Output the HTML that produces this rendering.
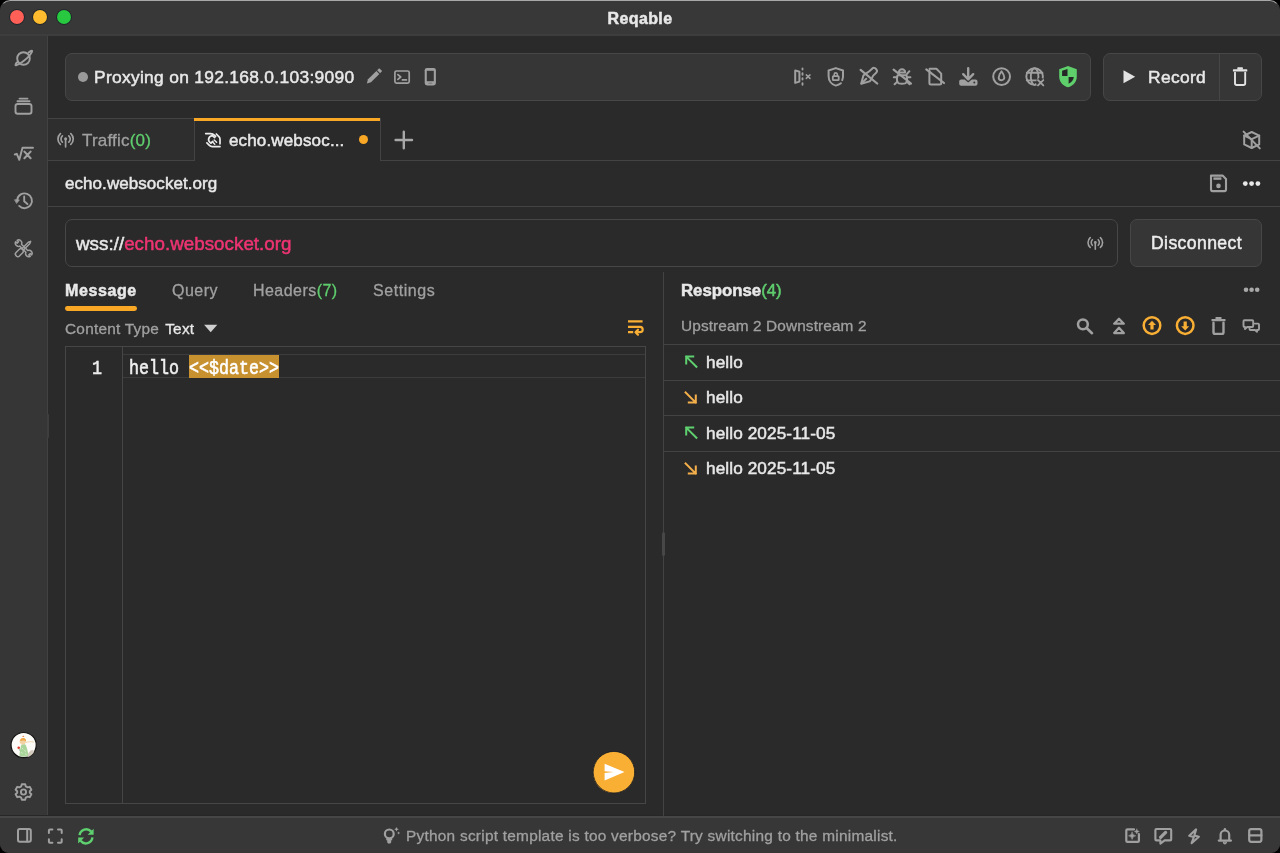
<!DOCTYPE html>
<html><head><meta charset="utf-8">
<style>
*{box-sizing:border-box;margin:0;padding:0}
html,body{width:1280px;height:853px;overflow:hidden;background:#000}
body{font-family:"Liberation Sans",sans-serif;color:#e6e6e6;position:relative}
.a{position:absolute}
.win{position:absolute;left:0;top:0;width:1280px;height:853px;background:#2a2a2a;border-radius:10px 10px 9px 9px;overflow:hidden}
.title{left:0;top:0;width:1280px;height:35px;background:#383838}
.hb{background:#424242}
.t{white-space:nowrap;line-height:1;transform:translateZ(0);-webkit-text-stroke:0.5px currentColor}
svg{position:absolute;overflow:visible}
</style></head><body>
<div class="win">
  <!-- title bar -->
  <div class="a title"></div>
  <div class="a" style="left:0;top:0;width:1280px;height:14px;border-top:1px solid #a8a8a8;border-left:1px solid rgba(168,168,168,0);border-right:1px solid rgba(168,168,168,0);border-radius:10px 10px 0 0"></div>
  <div class="a" style="left:9.6px;top:9.8px;width:14px;height:14px;border-radius:50%;background:#fe5f57;box-shadow:0 0 0 0.8px #1a2228"></div>
  <div class="a" style="left:33.3px;top:9.8px;width:14px;height:14px;border-radius:50%;background:#febc2e;box-shadow:0 0 0 0.8px #1a2228"></div>
  <div class="a" style="left:57.1px;top:9.8px;width:14px;height:14px;border-radius:50%;background:#28c840;box-shadow:0 0 0 0.8px #1a2228"></div>
  <div class="a t" style="left:0;width:1280px;top:10.6px;text-align:center;font-weight:bold;font-size:16px;letter-spacing:0.4px;color:#e8e8e8">Reqable</div>
  <div class="a" style="left:0;top:34px;width:1280px;height:2px;background:#3d3d3d"></div>

  <!-- sidebar -->
  <div class="a" style="left:0;top:36px;width:47px;height:780px;background:#363636"></div>
  <div class="a hb" style="left:47px;top:36px;width:1px;height:780px"></div>


  <svg width="1280" height="853" viewBox="0 0 1280 853" style="left:0;top:0" fill="none" stroke-linecap="round" stroke-linejoin="round">
    <!-- sidebar icons -->
    <g stroke="#a0a0a0" stroke-width="1.9">
      <!-- planet -->
      <circle cx="23.5" cy="58.5" r="6.3"/>
      <path d="M28.6 52.5 C31.5 50 32.8 50.2 31.8 52.2 C30.5 54.8 26 59.5 21.5 62.5 C17 65.5 15 66 15.5 64.5 C15.8 63.5 16.8 62.5 18 61.5"/>
      <!-- stack -->
      <rect x="15.5" y="104" width="16" height="9.8" rx="2.3"/>
      <path d="M17.5 101.2 H29.5 M19.5 98.6 H27.5"/>
      <!-- sqrt x -->
      <path d="M14.8 154.5 L16.8 153.8 L19.3 159.8 L22.5 147.8 H33"/>
      <path d="M24.4 151.6 L30.6 158.2 M30.6 151.6 L24.4 158.2" stroke-width="2.1"/>
      <!-- history -->
      <path d="M17.2 199.8 A7.4 7.4 0 1 1 19.2 205.9"/>
      <path d="M14.9 199.8 L19.3 199.9 L16.8 203.1 Z" fill="#a0a0a0" stroke-width="0.8"/>
      <path d="M24.2 196.4 V201.2 L27.4 204"/>
      <!-- tools -->
      <g transform="translate(23.7 248.3) rotate(-45)" stroke-width="1.5">
        <path d="M-1.3 -4.4 A3.1 3.1 0 0 1 -1 -10.3 V-8.3 H1 V-10.3 A3.1 3.1 0 0 1 1.3 -4.4 V4.4 A3.1 3.1 0 0 1 1 10.3 V8.3 H-1 V10.3 A3.1 3.1 0 0 1 -1.3 4.4 Z"/>
      </g>
      <g transform="translate(23.7 248.3) rotate(45)" stroke-width="1.5">
        <rect x="-2.4" y="1.6" width="4.8" height="9" rx="2.2"/>
        <path d="M-1 1.6 V-7.5 L0 -9.8 L1 -7.5 V1.6"/>
      </g>
      <!-- gear -->
      <circle cx="23.5" cy="792" r="2.6"/>
      <path d="M21.8 784.3 H25.2 L25.8 786.4 L27.6 787.4 L29.7 786.8 L31.4 789.7 L29.8 791.2 V792.8 L31.4 794.3 L29.7 797.2 L27.6 796.6 L25.8 797.6 L25.2 799.7 H21.8 L21.2 797.6 L19.4 796.6 L17.3 797.2 L15.6 794.3 L17.2 792.8 V791.2 L15.6 789.7 L17.3 786.8 L19.4 787.4 L21.2 786.4 Z"/>
    </g>
    <!-- avatar -->
    <circle cx="23.65" cy="745.1" r="12.6" fill="#fdfbf8" stroke="#141414" stroke-width="1.2"/>
    <path d="M27 756 C27.8 753.5 29.5 751 31.8 750 C33 749.8 34 750.6 34.2 751.8 C33 754.2 30.5 756.2 28 757 Z" fill="#d3cabd"/>
    <path d="M21.4 744.8 C22.4 744.2 24.8 744.2 25.6 744.8 C27 748 28.2 752 28.2 755.6 C26 757 21.4 757 19.4 755.6 C19.8 752 20.2 748 21.4 744.8 Z" fill="#a9d59a"/>
    <path d="M22 748 L23 749 M24.6 750.5 L25.6 751.3 M21.4 752.4 L22.4 753.2 M25.4 754 L26.4 754.6" stroke="#e8f2e0" stroke-width="0.7"/>
    <path d="M19.6 741.5 C19.6 739.5 21.2 738.3 23 738.3 C24.8 738.3 26.2 739.6 26 741.6 C25.8 743.4 24.6 744.6 23 744.6 C21.2 744.6 19.6 743.4 19.6 741.5 Z" fill="#f2d3a6"/>
    <path d="M20 740.6 C20.6 738.8 22 738 23.4 738.1 C25 738.3 26.3 739.4 26.1 741.2 C25 740.4 23.6 740.2 22.4 740.6 C21.6 740.9 20.8 741.1 20 740.6 Z" fill="#f0a844"/>
    <path d="M22.2 736.9 L23.2 735.5 L24.4 736.9 Z" fill="#ee7a3a"/>
    <path d="M26 742.4 C28.5 741.6 31 741.4 33.5 742" stroke="#f0d8b4" stroke-width="1" fill="none"/>
    <circle cx="18.7" cy="747.7" r="1.3" fill="#e03a2c"/>
    <path d="M19.2 749.2 L19.8 750.6" stroke="#6aa070" stroke-width="0.6"/>
  </svg>

  <!-- status bar -->
  <div class="a" style="left:0;top:815px;width:1280px;height:1px;background:#262626"></div>
  <div class="a" style="left:0;top:816px;width:1280px;height:37px;background:#373737;border-top:2px solid #464646"></div>

  <!-- proxy bar -->
  <div class="a" style="left:65px;top:53px;width:1026px;height:48px;background:#363636;border:1px solid #474747;border-radius:7px"></div>
  <div class="a" style="left:78px;top:72px;width:10px;height:10px;border-radius:50%;background:#9a9a9a"></div>
  <div class="a t" style="left:94px;top:69.4px;font-size:17.4px;color:#e8e8e8;letter-spacing:0.3px">Proxying on 192.168.0.103:9090</div>

  <!-- record group -->
  <div class="a" style="left:1103px;top:53px;width:159px;height:48px;background:#363636;border:1px solid #474747;border-radius:7px"></div>
  <div class="a hb" style="left:1219px;top:54px;width:1px;height:46px;background:#464646"></div>
  <div class="a t" style="left:1148px;top:68.9px;font-size:17.4px;color:#e8e8e8;letter-spacing:0.34px">Record</div>

  <!-- tab bar -->
  <div class="a" style="left:48px;top:118px;width:147px;height:43px;background:#2e2e2e;border-top:1px solid #434343;border-bottom:1px solid #434343;border-right:1px solid #434343"></div>
  <div class="a" style="left:380px;top:160px;width:900px;height:1px;background:#434343"></div>
  <div class="a" style="left:194px;top:118px;width:187px;height:3px;background:#f9a825"></div>
  <div class="a" style="left:380px;top:118px;width:1px;height:43px;background:#434343"></div>
  <div class="a t" style="left:82px;top:131.5px;font-size:17px;color:#a0a0a0;-webkit-text-stroke-width:0.3px;letter-spacing:0.2px">Traffic<span style="color:#5fce6e">(0)</span></div>
  <div class="a t" style="left:229px;top:131.5px;font-size:17px;color:#e8e8e8;letter-spacing:0.15px">echo.websoc...</div>
  <div class="a" style="left:359px;top:135px;width:9px;height:9px;border-radius:50%;background:#f9a825"></div>

  <!-- host row -->
  <div class="a t" style="left:65px;top:175.4px;font-size:17px;color:#e8e8e8;letter-spacing:0.06px">echo.websocket.org</div>
  <div class="a" style="left:48px;top:206px;width:1232px;height:1px;background:#434343"></div>

  <!-- url row -->
  <div class="a" style="left:65px;top:219px;width:1053px;height:48px;background:#2a2a2a;border:1px solid #474747;border-radius:7px"></div>
  <div class="a t" style="left:76px;top:234.8px;font-size:18.8px;color:#e8e8e8;letter-spacing:0.02px">wss://<span style="color:#ee3473">echo.websocket.org</span></div>
  <div class="a" style="left:1130px;top:219px;width:132px;height:48px;background:#363636;border:1px solid #474747;border-radius:7px"></div>
  <div class="a t" style="left:1151px;top:234.7px;font-size:17.6px;color:#ececec;letter-spacing:0.4px">Disconnect</div>

  <!-- left pane tabs -->
  <div class="a t" style="left:65px;top:283.2px;font-size:16px;letter-spacing:0.6px;font-weight:bold;color:#e8e8e8">Message</div>
  <div class="a" style="left:65px;top:306px;width:71.5px;height:4.8px;border-radius:2.4px;background:#f9a825"></div>
  <div class="a t" style="left:172px;top:283.2px;font-size:16px;letter-spacing:0.5px;color:#a0a0a0;-webkit-text-stroke-width:0.3px">Query</div>
  <div class="a t" style="left:253px;top:283.2px;font-size:16px;letter-spacing:0.45px;color:#a0a0a0;-webkit-text-stroke-width:0.3px">Headers<span style="color:#5fce6e">(7)</span></div>
  <div class="a t" style="left:373px;top:283.2px;font-size:16px;letter-spacing:0.55px;color:#a0a0a0;-webkit-text-stroke-width:0.3px">Settings</div>
  <div class="a t" style="left:65px;top:320.5px;font-size:15.4px;letter-spacing:0.24px;color:#a0a0a0;-webkit-text-stroke-width:0.3px">Content Type <span style="color:#e8e8e8;margin-left:1.5px">Text</span></div>

  <!-- editor -->
  <div class="a" style="left:65px;top:346px;width:581px;height:458px;border:1px solid #464646"></div>
  <div class="a" style="left:122px;top:347px;width:1px;height:456px;background:#464646"></div>
  <div class="a" style="left:123px;top:354px;width:522px;height:24px;border-top:1px solid #3c3c3c;border-bottom:1px solid #3c3c3c"></div>
  <div class="a t" style="left:92px;top:362.6px;font-family:'Liberation Mono',monospace;font-size:16.67px;color:#ececec;transform:translateZ(0) scaleY(1.2);transform-origin:0 100%">1</div>
  <div class="a" style="left:189px;top:355px;width:90px;height:23px;background:#c8912f"></div>
  <div class="a t" style="left:129px;top:362.6px;font-family:'Liberation Mono',monospace;font-size:16.67px;color:#f0f0f0;transform:translateZ(0) scaleY(1.2);transform-origin:0 100%">hello <span style="color:#fff">&lt;&lt;$date&gt;&gt;</span></div>
  <div class="a" style="left:593px;top:752px;width:41px;height:41px;border-radius:50%;background:#f9ae34"></div>

  <!-- divider -->
  <div class="a" style="left:663px;top:272px;width:1px;height:544px;background:#434343"></div>
  <div class="a" style="left:662px;top:532px;width:3px;height:24px;border-radius:1.5px;background:#474747"></div>
  <div class="a" style="left:47px;top:414px;width:2px;height:24px;border-radius:1px;background:#3e3e3e"></div>

  <!-- right pane -->
  <div class="a t" style="left:681px;top:283.2px;font-size:16.8px;font-weight:bold;color:#e8e8e8">Response<span style="color:#5fce6e;font-weight:normal">(4)</span></div>
  <div class="a t" style="left:681px;top:317.8px;font-size:15.4px;color:#a0a0a0;-webkit-text-stroke-width:0.3px;letter-spacing:0.11px">Upstream 2 Downstream 2</div>
  <div class="a" style="left:664px;top:344px;width:616px;height:1px;background:#434343"></div>
  <div class="a" style="left:664px;top:380px;width:616px;height:1px;background:#434343"></div>
  <div class="a" style="left:664px;top:415px;width:616px;height:1px;background:#434343"></div>
  <div class="a" style="left:664px;top:451px;width:616px;height:1px;background:#434343"></div>
  <div class="a t" style="left:706px;top:353.9px;font-size:17.2px;letter-spacing:0.1px;color:#e8e8e8">hello</div>
  <div class="a t" style="left:706px;top:389.4px;font-size:17.2px;letter-spacing:0.1px;color:#e8e8e8">hello</div>
  <div class="a t" style="left:706px;top:424.9px;font-size:17.2px;letter-spacing:0.1px;color:#e8e8e8">hello 2025-11-05</div>
  <div class="a t" style="left:706px;top:460.4px;font-size:17.2px;letter-spacing:0.1px;color:#e8e8e8">hello 2025-11-05</div>

  <!-- status text -->
  <div class="a t" style="left:406px;top:828.2px;font-size:15.4px;color:#a0a0a0;letter-spacing:0.25px;-webkit-text-stroke-width:0.3px">Python script template is too verbose? Try switching to the minimalist.</div>

  <svg width="1280" height="853" viewBox="0 0 1280 853" style="left:0;top:0" fill="none" stroke-linecap="round" stroke-linejoin="round">
    <!-- proxy bar left icons -->
    <g fill="#a0a0a0" transform="translate(373.6 76.7) rotate(45)">
      <path d="M-2.1 -10 H2.1 V-7.1 H-2.1 Z"/>
      <path d="M-2.1 -6 H2.1 V5.8 L0 9.6 L-2.1 5.8 Z"/>
    </g>
    <g stroke="#a0a0a0" stroke-width="1.7">
      <rect x="394.9" y="71" width="14.3" height="12.1" rx="1.6"/>
      <path d="M397.9 74.6 L400.7 77 L397.9 79.4 M402.4 79.9 H406.4"/>
    </g>
    <rect x="424.7" y="67.9" width="11.2" height="17.5" rx="2.3" fill="#a0a0a0"/>
    <rect x="426.8" y="70.8" width="7" height="10.4" fill="#363636"/>
    <path d="M428.8 83.2 H431.8" stroke="#6a6a6a" stroke-width="0.8"/>

    <!-- proxy bar right icons -->
    <g stroke="#a0a0a0" stroke-width="2">
      <path d="M795.2 70.4 L799.4 71.8 V81.6 L795.2 82.9 Z"/>
      <path d="M802.5 68.4 V69.6 M802.5 73.2 V74.8 M802.5 78.3 V79.6 M802.5 83.1 V84.8" stroke-width="1.9"/>
      <path d="M806.3 74.9 L810 78.4 M810 74.9 L806.3 78.4" stroke-width="1.5"/>
      <path d="M840.9 83.2 C839.5 84.3 837.7 85.1 835.8 85.6 C831.6 84.4 828.6 80.6 828.6 76.2 V70.5 L835.8 68.1 L843 70.5 V76.2 C843 77.6 842.7 78.9 842.2 80.1"/>
      <rect x="832.8" y="76.2" width="5.9" height="4" rx="0.6" stroke-width="1.8"/>
      <path d="M834.2 76.2 V74.4 A1.55 1.55 0 0 1 837.3 74.4 V76.2" stroke-width="1.6"/>
      <path d="M861.2 83.8 L863.4 75.6 C865.5 73.8 867.8 72.4 869.6 71 L872.4 68.4 C873.4 67.6 874.9 67.7 875.7 68.7 L876.5 69.7 C877.2 70.6 877.1 71.9 876.2 72.7 L873.2 75.6 C872 78.2 870.8 80.3 869.6 81.4 Z"/>
      <path d="M861.6 83.4 L866.2 78.8"/>
      <path d="M860.6 69.9 L877.2 83.5" stroke-width="2.2"/>
      <path d="M898.8 72.4 A3.2 3.2 0 0 1 905.2 72.4 Z"/>
      <path d="M897.6 75.2 H906.4 C907.3 77 907.3 81 906.4 82.4 C905.4 84.3 898.6 84.3 897.6 82.4 C896.7 81 896.7 77 897.6 75.2 Z"/>
      <path d="M893.8 77.3 H897.2 M906.8 77.3 H910.4 M894.6 84.3 L897.4 81.6 M909.6 84.3 L906.8 81.6 M909.4 71.2 L906.8 74.2"/>
      <path d="M893.6 69.6 L911 83.5" stroke-width="2.2"/>
      <path d="M929.6 68.8 H936.4 L941.2 73.6 V83 C941.2 83.8 940.5 84.5 939.7 84.5 H930.9 C930.1 84.5 929.4 83.8 929.4 83 V70.4"/>
      <path d="M926.3 69.4 L944 83" stroke-width="2.2"/>
      <path d="M968.2 68.2 V79 M963.2 74.2 L968.2 79.4 L973.2 74.2" stroke-width="2.4"/>
      <circle cx="1001.6" cy="76.6" r="8.4" stroke-width="2"/>
      <path d="M1001.5 71.2 C1003.4 73.8 1004.3 75.6 1004.3 77.4 A2.8 2.8 0 0 1 998.7 77.4 C998.7 75.6 999.6 73.8 1001.5 71.2 Z" stroke-width="1.9"/>
      <circle cx="1034.6" cy="76.6" r="8.3" stroke-width="1.9"/>
      <ellipse cx="1034.6" cy="76.6" rx="3.8" ry="8.3" stroke-width="1.9"/>
      <path d="M1026.8 72.8 H1042.4 M1026.8 80.4 H1038" stroke-width="1.9"/>
    </g>
    <path d="M959.2 81.4 C959.2 80.3 960.1 79.4 961.2 79.4 H964.6 L968.2 82.6 L971.8 79.4 H975.5 C976.6 79.4 977.5 80.3 977.5 81.4 V83.7 C977.5 84.8 976.6 85.7 975.5 85.7 H961.2 C960.1 85.7 959.2 84.8 959.2 83.7 Z" fill="#a0a0a0"/>
    <circle cx="974.3" cy="82.5" r="1" fill="#363636"/>
    <circle cx="1040.6" cy="82.6" r="4.6" fill="#363636"/>
    <path d="M1038 80.1 L1043.3 85.4 M1043.3 80.1 L1038 85.4" stroke="#a0a0a0" stroke-width="1.9" stroke-linecap="round"/>
    <path d="M1068 66 L1076.8 69.2 V76.4 C1076.8 81.8 1073 85.8 1068 87.3 C1063 85.8 1059.2 81.8 1059.2 76.4 V69.2 Z" fill="#5fcf6c"/>
    <path d="M1062.1 70.8 L1067.5 69 V76 H1062.1 Z" fill="#262626"/>
    <path d="M1068.6 77.1 H1073.8 C1073.4 80.2 1071.6 82.5 1068.6 83.8 Z" fill="#262626"/>

    <!-- record group -->
    <path d="M1123.5 70.2 L1135.2 76.7 L1123.5 83.2 Z" fill="#e2e2e2"/>
    <rect x="1232.9" y="69.3" width="14.4" height="2.3" rx="0.6" fill="#e2e2e2"/>
    <rect x="1237.3" y="67.3" width="5.6" height="2.4" rx="0.6" fill="#e2e2e2"/>
    <path d="M1235 72.6 V83.3 C1235 84.3 1235.7 85 1236.7 85 H1243.5 C1244.5 85 1245.2 84.3 1245.2 83.3 V72.6" stroke="#e2e2e2" stroke-width="1.9" fill="none"/>

    <!-- tab bar icons -->
    <g stroke="#a0a0a0" stroke-width="1.7">
      <path d="M65.6 139.5 V146.8"/>
      <path d="M62.4 135.8 A4.3 4.3 0 0 0 62.4 142.2 M68.8 135.8 A4.3 4.3 0 0 1 68.8 142.2"/>
      <path d="M60.4 133.6 A7.2 7.2 0 0 0 60.4 144.4 M70.8 133.6 A7.2 7.2 0 0 1 70.8 144.4"/>
    </g>
    <circle cx="65.6" cy="138.8" r="1.5" fill="#a0a0a0"/>
    <g stroke="#ececec" stroke-width="1.7">
      <path d="M205.7 133.6 H210.6 C212.2 133.6 213.5 134.3 214.6 135.4 L215.6 136.4"/>
      <path d="M216.3 134 L219.1 136.9 C219.7 137.5 220 138.3 220 139.1 V143.8"/>
      <path d="M206.9 142.9 L209.4 145.4 C210.2 146.2 211.1 146.6 212.2 146.6 H220"/>
      <path d="M214.7 137.5 L212.4 135.6 C210.8 135.8 209 137 208.6 139 C208.3 140.6 209.3 142.2 211 143.2 L212.8 141.4"/>
      <path d="M212.4 141.8 L214.8 144.2 M214.2 139.9 L216.6 142.3" stroke-width="1.4"/>
    </g>
    <path d="M395.6 140 H412 M403.8 131.8 V148.2" stroke="#a8a8a8" stroke-width="2.4"/>
    <g stroke="#a0a0a0" stroke-width="2">
      <path d="M1251.7 132 L1259.2 135.6 V144.4 L1251.7 148 L1244.2 144.4 V135.6 Z"/>
      <path d="M1244.2 135.6 L1251.7 139.2 L1259.2 135.6 M1251.7 139.2 V148"/>
      <path d="M1243.6 131.6 L1259.8 148.4"/>
    </g>
    <!-- host row icons -->
    <path d="M1211 175.6 H1222.6 L1226 179 V189.6 C1226 190.5 1225.4 191.1 1224.5 191.1 H1212.5 C1211.6 191.1 1211 190.5 1211 189.6 Z" stroke="#a0a0a0" stroke-width="2.1"/>
    <rect x="1213.4" y="177.4" width="8" height="2.4" fill="#a0a0a0"/>
    <circle cx="1218.5" cy="185.9" r="2.3" fill="#a0a0a0"/>
    <circle cx="1245.3" cy="183.6" r="2.4" fill="#e8e8e8"/>
    <circle cx="1251.6" cy="183.6" r="2.4" fill="#e8e8e8"/>
    <circle cx="1257.9" cy="183.6" r="2.4" fill="#e8e8e8"/>

    <!-- url antenna -->
    <g stroke="#a0a0a0" stroke-width="1.6">
      <path d="M1095.3 243 V249.2"/>
      <path d="M1092.4 239.7 A3.9 3.9 0 0 0 1092.4 245.3 M1098.2 239.7 A3.9 3.9 0 0 1 1098.2 245.3"/>
      <path d="M1090.2 237.6 A6.6 6.6 0 0 0 1090.2 247.4 M1100.4 237.6 A6.6 6.6 0 0 1 1100.4 247.4"/>
    </g>
    <circle cx="1095.3" cy="242.5" r="1.4" fill="#a0a0a0"/>

    <!-- content type triangle & wrap -->
    <path d="M204.1 324.7 H217.3 L210.7 332.3 Z" fill="#cfcfcf"/>
    <g stroke="#f9ae34" stroke-width="2.2" stroke-linecap="butt">
      <path d="M628 321.3 H642.6 M628 326.8 H640 A2.7 2.7 0 0 1 640 332.2 H636.5 M628 332.2 H633.2"/>
      <path d="M638 329.7 L635.5 332.2 L638 334.7" stroke-linecap="round"/>
    </g>

    <!-- send button -->
    <circle cx="614" cy="772.2" r="20.8" fill="#f9ae34" stroke="#141a24" stroke-width="0.8"/>
    <path d="M604.6 763.7 L624.5 772.1 L604.6 780.5 V773 L613.8 772.1 L604.6 771.2 Z" fill="#ffffff"/>

    <!-- response toolbar -->
    <circle cx="1246" cy="289.8" r="2.3" fill="#a8a8a8"/>
    <circle cx="1251.6" cy="289.8" r="2.3" fill="#a8a8a8"/>
    <circle cx="1257.2" cy="289.8" r="2.3" fill="#a8a8a8"/>
    <g stroke="#a0a0a0" stroke-width="2">
      <circle cx="1082.9" cy="324.3" r="4.9" stroke-width="2.5"/>
      <path d="M1086.6 328 L1092 333.2" stroke-width="2.6"/>
      <path d="M1119 318.8 L1123.8 323.7 H1114.2 Z M1119 327.8 L1123.8 333.1 H1114.2 Z" stroke-width="2.3"/>
      <path d="M1213.5 322.8 V332.2 C1213.5 333.2 1214.2 333.9 1215.2 333.9 H1221.8 C1222.8 333.9 1223.5 333.2 1223.5 332.2 V322.8" stroke-width="2.4"/>
    </g>
    <rect x="1211.5" y="319" width="14" height="2.2" rx="0.5" fill="#a0a0a0"/>
    <rect x="1215.5" y="317" width="6" height="2.4" rx="0.5" fill="#a0a0a0"/>
    <g stroke="#a0a0a0" stroke-width="1.9">
      <path d="M1244.5 320.2 H1252.2 C1252.8 320.2 1253.2 320.6 1253.2 321.2 V326 C1253.2 326.6 1252.8 327 1252.2 327 H1247.2 L1245 329 V327 H1244.5 C1243.9 327 1243.5 326.6 1243.5 326 V321.2 C1243.5 320.6 1243.9 320.2 1244.5 320.2 Z"/>
      <path d="M1254.8 323.6 H1258 C1258.6 323.6 1259 324 1259 324.6 V329 C1259 329.6 1258.6 330 1258 330 H1257 V331.8 L1255 330 H1250.5 C1249.9 330 1249.5 329.6 1249.5 329 V328.5"/>
    </g>
    <circle cx="1152" cy="325.6" r="8.3" stroke="#f9ae34" stroke-width="2.5"/>
    <path d="M1152 320.8 L1156 324.9 H1153.6 V329.6 H1150.4 V324.9 H1148 Z" fill="#f9ae34"/>
    <circle cx="1185.2" cy="325.6" r="8.3" stroke="#f9ae34" stroke-width="2.5"/>
    <path d="M1185.2 330.4 L1189.2 326.3 H1186.8 V321.6 H1183.6 V326.3 H1181.2 Z" fill="#f9ae34"/>

    <!-- row arrows -->
    <g stroke-width="2" stroke-linecap="square" stroke-linejoin="miter">
      <path d="M696.4 366.8 L686.2 356.6 M686.2 363.6 V356.6 H693.2" stroke="#5fd06f"/>
      <path d="M685.6 392.4 L695.8 402.6 M695.8 395.6 V402.6 H688.8" stroke="#f4ae4a"/>
      <path d="M696.4 437.8 L686.2 427.6 M686.2 434.6 V427.6 H693.2" stroke="#5fd06f"/>
      <path d="M685.6 463.4 L695.8 473.6 M695.8 466.6 V473.6 H688.8" stroke="#f4ae4a"/>
    </g>

    <!-- status bar icons -->
    <g stroke="#a0a0a0" stroke-width="2">
      <rect x="18" y="828.9" width="12.8" height="12.9" rx="1.8"/>
      <path d="M27.2 829.2 V841.6"/>
      <path d="M48.9 833 V830.6 C48.9 830 49.3 829.6 49.9 829.6 H52.4 M58 829.6 H60.7 C61.3 829.6 61.7 830 61.7 830.6 V833 M61.7 839.2 V841.8 C61.7 842.4 61.3 842.8 60.7 842.8 H58 M52.4 842.8 H49.9 C49.3 842.8 48.9 842.4 48.9 841.8 V839.2"/>
      <circle cx="389.3" cy="833.9" r="4.4" stroke-width="2.2"/>
      <path d="M1134 829.4 H1127.4 C1126.7 829.4 1126.3 829.8 1126.3 830.5 V840.8 C1126.3 841.5 1126.7 841.9 1127.4 841.9 H1137.8 C1138.5 841.9 1138.9 841.5 1138.9 840.8 V834" stroke-width="2.2"/>
      <path d="M1156.4 829 H1170.2 C1170.8 829 1171.2 829.4 1171.2 830 V839.4 C1171.2 840 1170.8 840.4 1170.2 840.4 H1164.6 L1160.4 843.6 V840.4 H1156.4 C1155.8 840.4 1155.4 840 1155.4 839.4 V830 C1155.4 829.4 1155.8 829 1156.4 829 Z" stroke-width="2.1"/>
      <path d="M1196.1 829.4 L1189.2 835.7 L1193.9 837 L1191.6 843.2 L1198.9 836.8 L1194.4 835.4 Z" stroke-width="2.1"/>
      <path d="M1220.6 839.6 V834.8 A4.3 4.3 0 0 1 1229.2 834.8 V839.6 M1218.8 840.6 H1231" stroke-width="2.2"/>
      <rect x="1249.2" y="829.1" width="12.2" height="12.7" rx="2" stroke-width="2.2"/>
      <path d="M1249.2 835.3 H1261.4" stroke-width="2.2"/>
    </g>
    <path d="M386.2 838.3 H392.2 V840.3 H391.2 V842 C391.2 842.9 390.5 843.5 389.6 843.5 H388.8 C387.9 843.5 387.2 842.9 387.2 842 V840.3 H386.2 Z" fill="#a0a0a0"/>
    <path d="M396.5 826.9 Q396.8 828.9 398.8 829.2 Q396.8 829.5 396.5 831.5 Q396.2 829.5 394.2 829.2 Q396.2 828.9 396.5 826.9 Z" fill="#a0a0a0"/>
    <path d="M398.6 831.4 Q398.8 832.8 400.2 833 Q398.8 833.2 398.6 834.6 Q398.4 833.2 397 833 Q398.4 832.8 398.6 831.4 Z" fill="#a0a0a0"/>
    <path d="M1160.6 837.4 L1165.6 832.4" stroke="#a0a0a0" stroke-width="3.2" stroke-linecap="round"/>
    <path d="M1132.1 832.2 Q1132.5 835.4 1135.7 835.8 Q1132.5 836.2 1132.1 839.4 Q1131.7 836.2 1128.5 835.8 Q1131.7 835.4 1132.1 832.2 Z" fill="#a0a0a0" stroke="#a0a0a0" stroke-width="0.6"/>
    <path d="M1136.8 829 Q1137.1 831.2 1139.3 831.5 Q1137.1 831.8 1136.8 834 Q1136.5 831.8 1134.3 831.5 Q1136.5 831.2 1136.8 829 Z" fill="#a0a0a0" stroke="#a0a0a0" stroke-width="0.4"/>
    <circle cx="1224.9" cy="829.4" r="1.3" fill="#a0a0a0"/>
    <path d="M1223.3 842.4 A1.6 1.6 0 0 0 1226.5 842.4 Z" fill="#a0a0a0" stroke="#a0a0a0" stroke-width="1"/>
    <g stroke="#5fd06f" stroke-width="2.4" stroke-linecap="butt">
      <path d="M79.6 835.2 A6.6 6.6 0 0 1 91.2 831.6"/>
      <path d="M92.4 837.4 A6.6 6.6 0 0 1 80.6 840.8"/>
    </g>
    <path d="M93.6 828.8 V834.8 H87.6 Z" fill="#5fd06f"/>
    <path d="M78.2 843.6 V837.6 H84.2 Z" fill="#5fd06f"/>
  </svg>
</div>
</body></html>
